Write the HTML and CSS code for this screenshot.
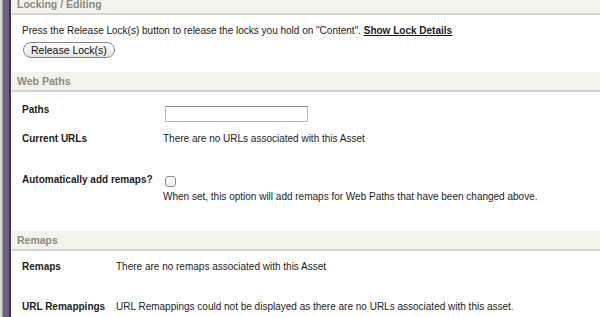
FILE: index.html
```html
<!DOCTYPE html>
<html lang="en">
<head>
    <meta charset="UTF-8">
    <title>Asset Details</title>
    <link rel="stylesheet" href="styles.css">
</head>
<body>
    <div class="layout">
        <div class="rail"></div>
        <main class="content">
            <section class="section">
                <h2 class="section-head">Locking / Editing</h2>
                <div class="section-body lock-body">
                    <p>Press the Release Lock(s) button to release the locks you hold on "Content". <a href="#" class="lock-link">Show Lock Details</a></p>
                    <button type="button" class="pill-btn">Release Lock(s)</button>
                </div>
            </section>

            <section class="section">
                <h2 class="section-head">Web Paths</h2>
                <div class="section-body fields web-fields">
                    <div class="label">Paths</div>
                    <div class="value"><input type="text" class="text-input"></div>

                    <div class="label">Current URLs</div>
                    <div class="value">There are no URLs associated with this Asset</div>

                    <div class="label">Automatically add remaps?</div>
                    <div class="value">
                        <input type="checkbox" class="check">
                        <div class="note">When set, this option will add remaps for Web Paths that have been changed above.</div>
                    </div>
                </div>
            </section>

            <section class="section">
                <h2 class="section-head">Remaps</h2>
                <div class="section-body fields remap-fields">
                    <div class="label">Remaps</div>
                    <div class="value">There are no remaps associated with this Asset</div>

                    <div class="label">URL Remappings</div>
                    <div class="value">URL Remappings could not be displayed as there are no URLs associated with this asset.</div>
                </div>
            </section>
        </main>
    </div>
</body>
</html>
```

FILE: styles.css
```css
:root {
    --head-bg: #f3f2eb;
    --head-text: #8b8a82;
    --line: #d3d3d3;
    --text: #1c1c1c;
}

* {
    margin: 0;
    padding: 0;
    box-sizing: border-box;
}

body {
    width: 600px;
    height: 317px;
    overflow: hidden;
    background: #fff;
    font-family: "Liberation Sans", Arial, sans-serif;
    font-size: 10px;
    line-height: 12px;
    color: var(--text);
}

.layout {
    display: flex;
    min-height: 100%;
}

.rail {
    flex: 0 0 11px;
    background: linear-gradient(to right, #dcdcdc 0 2px, #9c9a9e 2px 3px, #705f80 3px 9px, #3e3248 9px 11px);
}

.content {
    flex: 1;
    margin-top: -5px;
    border-left: 1px solid #fafafa;
}

.section-head {
    height: 20px;
    padding-left: 5px;
    background: var(--head-bg);
    border-bottom: 2px solid var(--line);
    color: var(--head-text);
    font-size: 10.5px;
    font-weight: bold;
    line-height: 18px;
}

.section-body {
    padding-left: 10px;
}

.lock-body {
    padding-top: 10px;
    padding-bottom: 14px;
}

.lock-link {
    color: var(--text);
    font-weight: bold;
    text-decoration: underline;
}

.pill-btn {
    display: block;
    height: 16px;
    margin-top: 5px;
    margin-left: 1px;
    padding: 0 7px;
    border: 1px solid #878787;
    border-radius: 9px;
    background: linear-gradient(#ffffff, #e4e4e4);
    font-family: "Liberation Sans", Arial, sans-serif;
    font-size: 10.5px;
    line-height: 14px;
    color: #111;
}

.fields {
    display: grid;
    align-items: start;
}

.web-fields {
    grid-template-columns: 141px 1fr;
    grid-template-rows: 29px 41px auto;
    padding-top: 12px;
    padding-bottom: 28px;
}

.remap-fields {
    grid-template-columns: 94px 1fr;
    grid-template-rows: 40px 40px;
    padding-top: 10px;
}

.label {
    font-weight: bold;
}

.text-input {
    display: block;
    width: 143px;
    height: 16px;
    margin: 2px 0 0 2px;
    border: 1px solid #b8b8b8;
    border-top-color: #8e8e8e;
    background: #fff;
}

.check {
    display: block;
    appearance: none;
    width: 11px;
    height: 11px;
    margin: 2px 0 4px 2px;
    border: 1px solid #8c8c8c;
    border-radius: 3px;
    background: linear-gradient(#ffffff, #ececec);
}
```
